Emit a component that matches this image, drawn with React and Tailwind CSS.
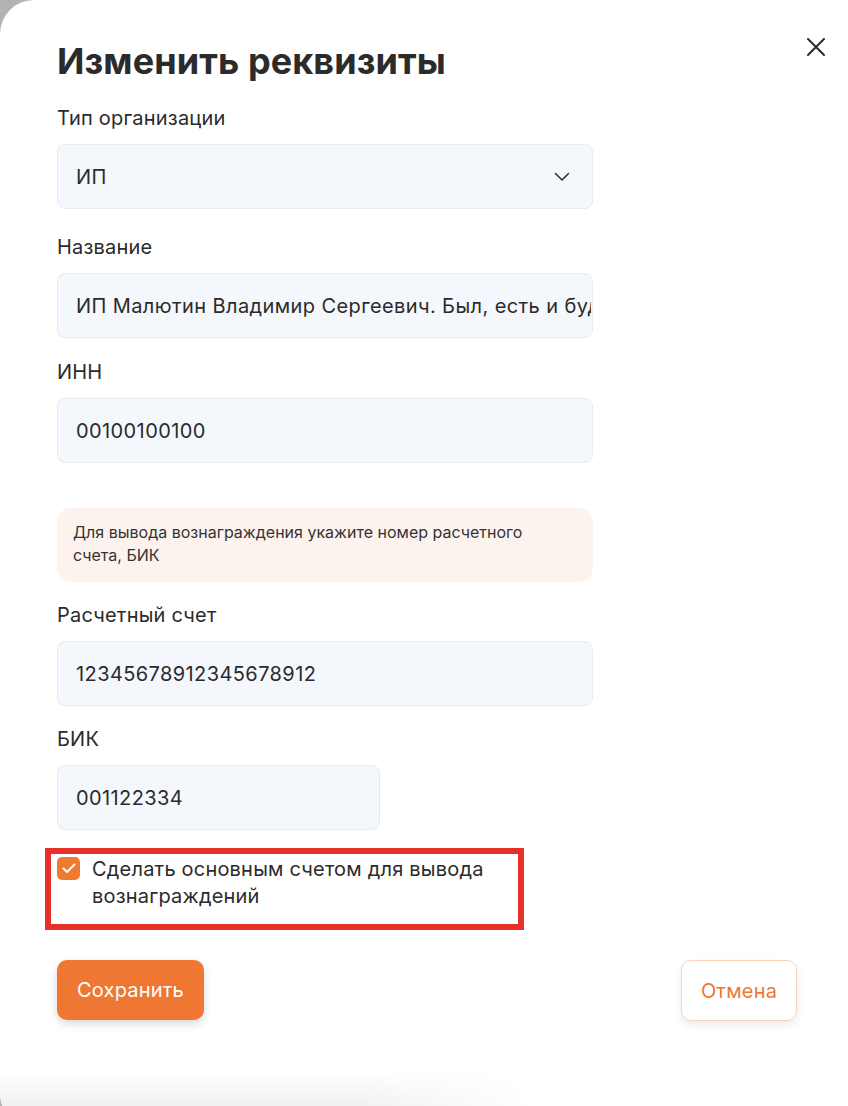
import React from "react";

const font = { fontFamily: "Inter, 'Noto Sans', sans-serif" };

function Field({ label, value, className = "w-[536px]", select = false }) {
  return (
    <div className="flex flex-col">
      <div className="text-[20px] leading-[24px] text-[#2b2b2b] mb-[14px] tracking-[0.2px]">{label}</div>
      <div
        className={`${className} h-[65px] rounded-[8px] bg-[#f4f7fc] border border-[#e6eaf1] flex items-center pl-[18px] overflow-hidden ${select ? "pr-[22px]" : "pr-[1px]"}`}
      >
        <span className="flex-1 whitespace-nowrap overflow-hidden text-[20px] text-[#2b2b2b] tracking-[0.4px]">
          {value}
        </span>
        {select && (
          <svg width="16" height="10" viewBox="0 0 16 10" fill="none" className="shrink-0">
            <path d="M1.5 1.5 L8 8 L14.5 1.5" stroke="#333" strokeWidth="1.6" strokeLinecap="round" strokeLinejoin="round" />
          </svg>
        )}
      </div>
    </div>
  );
}

export default function App() {
  return (
    <div className="w-[848px] h-[1106px] overflow-hidden bg-[#b3b3b3]" style={font}>
      <div className="relative w-[848px] h-[1140px] bg-white rounded-tl-[34px] rounded-bl-[48px] overflow-hidden flex flex-col">
        <div className="flex justify-between pl-[57px] pr-[22px] pt-[40px]">
          <h1 className="text-[36px] leading-[42px] font-bold text-[#2b2b2b] tracking-[0.1px]">
            Изменить реквизиты
          </h1>
          <svg width="20" height="20" viewBox="0 0 20 20" className="mt-[-3px]" fill="none">
            <path d="M2 2 L18 18 M18 2 L2 18" stroke="#2b2b2b" strokeWidth="2" strokeLinecap="round" />
          </svg>
        </div>

        <div className="pl-[57px] flex flex-col mt-[24px]">
          <Field label="Тип организации" value="ИП" select />
          <div className="h-[26px]" />
          <Field label="Название" value="ИП Малютин Владимир Сергеевич. Был, есть и будет" />
          <div className="h-[22px]" />
          <Field label="ИНН" value="00100100100" />

          <div className="mt-[45px] w-[536px] h-[74px] rounded-[14px] bg-[#fdf3ee] px-[16px] pt-[13px] text-[16px] leading-[23px] text-[#333]">
            Для вывода вознаграждения укажите номер расчетного
            <br />
            счета, БИК
          </div>

          <div className="h-[21px]" />
          <Field label="Расчетный счет" value="12345678912345678912" />
          <div className="h-[21px]" />
          <Field label="БИК" value="001122334" className="w-[323px]" />

          <div className="mt-[18px] ml-[-12px] w-[479px] h-[82px] border-[6px] border-[#e8302a] flex items-start pl-[6px] pt-[2px]">
            <div className="w-[23px] h-[23px] rounded-[5px] bg-[#ef7a32] flex items-center justify-center shrink-0 mt-[1px]">
              <svg width="14" height="11" viewBox="0 0 14 11" fill="none">
                <path d="M1.5 5.5 L5 9 L12.5 1.5" stroke="white" strokeWidth="2" strokeLinecap="round" strokeLinejoin="round" />
              </svg>
            </div>
            <div className="ml-[12px] text-[20px] leading-[27px] text-[#2b2b2b] tracking-[0.2px]">
              Сделать основным счетом для вывода
              <br />
              вознаграждений
            </div>
          </div>

          <div className="mt-[30px] flex justify-between w-[740px]">
            <button className="w-[147px] h-[60px] rounded-[10px] bg-[#ef7731] text-white text-[20px] tracking-[0.2px] shadow-[0_4px_8px_rgba(0,0,0,0.15)]">
              Сохранить
            </button>
            <button className="w-[116px] h-[61px] rounded-[10px] bg-white border border-[#fcd3b5] text-[#ef7731] text-[20px] tracking-[0.2px] shadow-[0_4px_8px_rgba(0,0,0,0.08)]">
              Отмена
            </button>
          </div>
        </div>

        <div className="mt-auto w-[560px] h-[70px] bg-[linear-gradient(to_bottom,#ffffff,#e4e4e4)] [mask-image:linear-gradient(to_right,black_65%,transparent_95%)]" />
      </div>
    </div>
  );
}
